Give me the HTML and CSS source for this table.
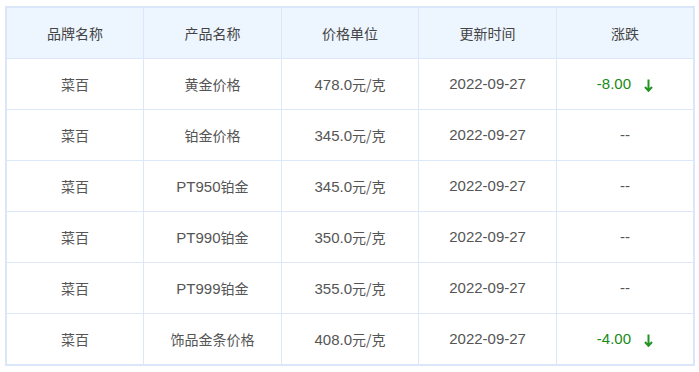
FILE: index.html
```html
<!DOCTYPE html>
<html lang="zh-CN">
<head>
<meta charset="utf-8">
<title>金价</title>
<link rel="stylesheet" href="styles.css">
</head>
<body>
<div class="wrap">
<table class="price-table">
  <thead>
    <tr><th>品牌名称</th><th>产品名称</th><th>价格单位</th><th>更新时间</th><th>涨跌</th></tr>
  </thead>
  <tbody>
    <tr><td>菜百</td><td>黄金价格</td><td><span class="num">478.0</span>元/克</td><td class="num">2022-09-27</td><td class="num down">-8.00<svg class="arrow" width="9" height="13" viewBox="0 0 9 13"><path d="M4.5 0.5V11.5M1 8L4.5 11.8L8 8" fill="none" stroke="#239323" stroke-width="2"/></svg></td></tr>
    <tr><td>菜百</td><td>铂金价格</td><td><span class="num">345.0</span>元/克</td><td class="num">2022-09-27</td><td class="num">--</td></tr>
    <tr><td>菜百</td><td><span class="num">PT950</span>铂金</td><td><span class="num">345.0</span>元/克</td><td class="num">2022-09-27</td><td class="num">--</td></tr>
    <tr><td>菜百</td><td><span class="num">PT990</span>铂金</td><td><span class="num">350.0</span>元/克</td><td class="num">2022-09-27</td><td class="num">--</td></tr>
    <tr><td>菜百</td><td><span class="num">PT999</span>铂金</td><td><span class="num">355.0</span>元/克</td><td class="num">2022-09-27</td><td class="num">--</td></tr>
    <tr><td>菜百</td><td>饰品金条价格</td><td><span class="num">408.0</span>元/克</td><td class="num">2022-09-27</td><td class="num down">-4.00<svg class="arrow" width="9" height="13" viewBox="0 0 9 13"><path d="M4.5 0.5V11.5M1 8L4.5 11.8L8 8" fill="none" stroke="#239323" stroke-width="2"/></svg></td></tr>
  </tbody>
</table>
</div>
</body>
</html>
```
FILE: styles.css
```css
html, body {
  margin: 0;
  padding: 0;
  background: #ffffff;
}
.wrap {
  padding: 6px 5px;
}
.price-table {
  width: 690px;
  border-collapse: collapse;
  border: 2px solid #dbe7f8;
  table-layout: fixed;
  font-family: "Noto Sans CJK SC", sans-serif;
  font-size: 14px;
  color: #555555;
}
.price-table th,
.price-table td {
  border: 1px solid #dce8f9;
  text-align: center;
  vertical-align: middle;
  padding: 0;
  font-weight: normal;
  line-height: 20px;
}
.price-table th {
  height: 50px;
  background: #edf5ff;
  color: #444444;
}
.price-table td {
  height: 50px;
}
.num {
  font-family: "Liberation Sans", "Noto Sans CJK SC", sans-serif;
  font-size: 15px;
}
.down {
  color: #178a17;
}
.arrow {
  margin-left: 13px;
  vertical-align: -3px;
}
```
